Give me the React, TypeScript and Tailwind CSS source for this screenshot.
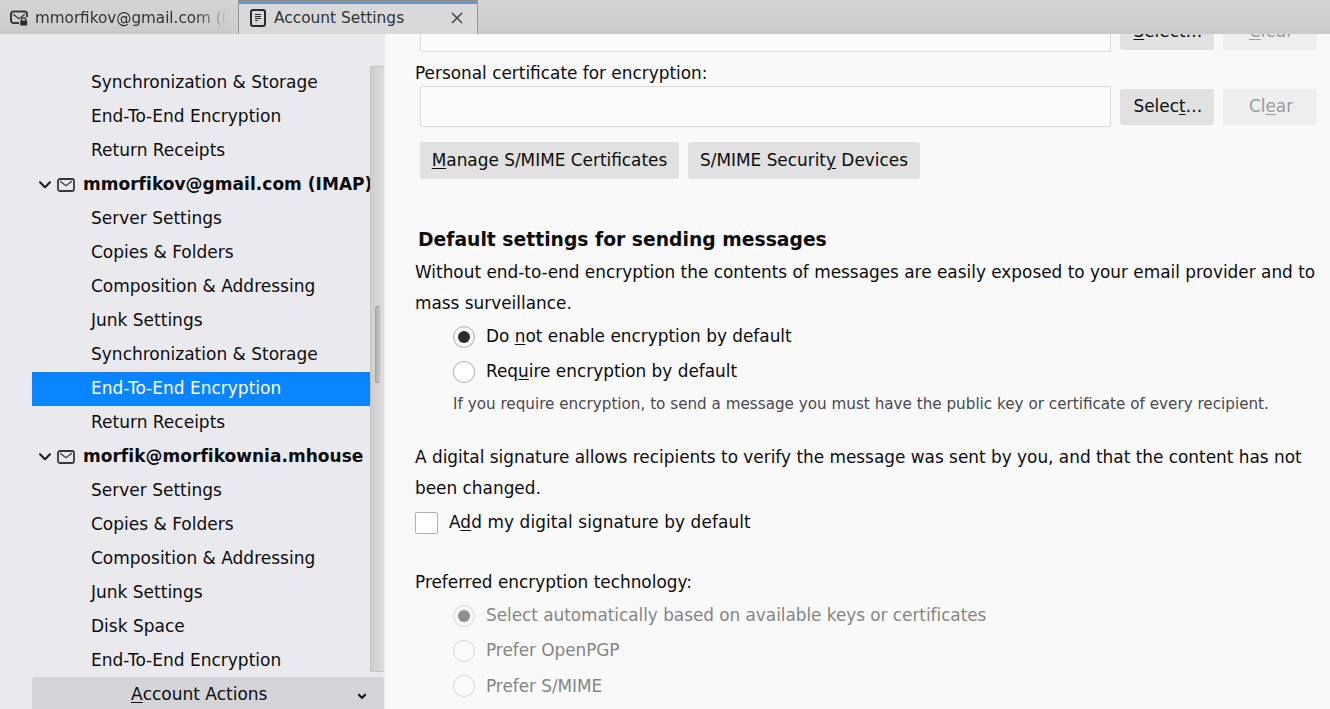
import type { ReactNode } from 'react';

const U = ({ children }: { children: ReactNode }) => (
  <span className="underline decoration-1 underline-offset-2">{children}</span>
);

const Envelope = ({ lock = false }: { lock?: boolean }) => (
  <svg width="18" height="16" viewBox="0 0 18 16" fill="none" className="shrink-0">
    <path d={lock ? 'M9 13H3.500a2.500 2.500 0 0 1-2.500-2.500V4A2.500 2.500 0 0 1 3.500 1.500h11A2.500 2.500 0 0 1 17 4V7' : 'M3 2h12a2 2 0 0 1 2 2v8a2 2 0 0 1-2 2H3a2 2 0 0 1-2-2V4a2 2 0 0 1 2-2z'} stroke="#38383b" strokeWidth={lock ? 2 : 1.8} />
    <path d="M3.500 4.500 9 8.800l5.500-4.300" stroke="#38383b" strokeWidth="1.200" strokeLinecap="round" />
    {lock && (
      <>
        <path d="M11.500 11V9.800a2.200 2.200 0 0 1 4.400 0V11" stroke="#2b2b2b" strokeWidth="1.200" />
        <rect x="10.200" y="10.500" width="7" height="5" rx="1" fill="#2b2b2b" />
      </>
    )}
  </svg>
);

const Twisty = () => (
  <svg width="12" height="8" viewBox="0 0 12 8" fill="none" className="shrink-0">
    <path d="M1 1.300 6 6.300l5-5" stroke="#18181b" strokeWidth="2" strokeLinecap="round" strokeLinejoin="round" />
  </svg>
);

type Item = { label: string; account?: boolean; selected?: boolean };

const items: Item[] = [
  { label: 'Synchronization & Storage' },
  { label: 'End-To-End Encryption' },
  { label: 'Return Receipts' },
  { label: 'mmorfikov@gmail.com (IMAP)', account: true },
  { label: 'Server Settings' },
  { label: 'Copies & Folders' },
  { label: 'Composition & Addressing' },
  { label: 'Junk Settings' },
  { label: 'Synchronization & Storage' },
  { label: 'End-To-End Encryption', selected: true },
  { label: 'Return Receipts' },
  { label: 'morfik@morfikownia.mhouse', account: true },
  { label: 'Server Settings' },
  { label: 'Copies & Folders' },
  { label: 'Composition & Addressing' },
  { label: 'Junk Settings' },
  { label: 'Disk Space' },
  { label: 'End-To-End Encryption' },
];

function TreeRow({ label, account, selected }: Item) {
  if (account) {
    return (
      <li className="flex h-[34px] items-center pl-[7px] font-bold tracking-[0.03px]">
        <Twisty />
        <span className="ml-[6px] flex"><Envelope /></span>
        <span className="ml-2 pb-[2px] leading-[32px]">{label}</span>
      </li>
    );
  }
  return (
    <li className={selected ? 'h-[34px] bg-[#0a84ff] pl-[59px] leading-[32px] text-white' : 'h-[34px] pl-[59px] leading-[32px]'}>
      {label}
    </li>
  );
}

function CertificateRow({ select, clear }: { select: ReactNode; clear: ReactNode }) {
  return (
    <div className="flex h-[41px] items-center pl-[5px]">
      <div className="h-[41px] w-[691px] rounded-[2px] border border-[#d9d9d9] bg-[#fbfbfb]" />
      <button className="ml-[9px] h-9 w-[94px] rounded-[2px] bg-[#e1e1e1] pl-[2px]">{select}</button>
      <button disabled className="ml-[9px] h-9 w-[94px] rounded-[2px] bg-[#eeeeee] pl-[2px] text-[#9b9b9b]">{clear}</button>
    </div>
  );
}

function Radio({ checked, disabled, children }: { checked?: boolean; disabled?: boolean; children: ReactNode }) {
  return (
    <label className={disabled ? 'flex h-[35.300px] items-center pl-[38px] tracking-[-0.04px] text-[#858585]' : 'flex h-[35px] items-center pl-[38px]'}>
      <span className={`flex size-[22px] items-center justify-center rounded-full border ${disabled ? 'border-[#d6d6d6]' : 'border-[#afafaf]'} ${checked ? 'bg-[#f6f6f6]' : disabled ? 'bg-[#fcfcfc]' : 'bg-white'}`}>
        {checked && <span className={disabled ? 'size-3 rounded-full bg-[#8e8e8e]' : 'size-3 rounded-full bg-[#2b2b2b]'} />}
      </span>
      <span className="ml-[11px]">{children}</span>
    </label>
  );
}

export default function App() {
  return (
    <div className="flex h-[709px] w-[1330px] flex-col overflow-hidden bg-[#f9f9fa] font-['DejaVu_Sans',sans-serif] text-[16.900px] whitespace-nowrap text-[#0c0c0d]">
      <header className="flex h-[34px] shrink-0 bg-linear-to-b from-[#d5d5d5] to-[#cacaca] text-[15.400px] text-[#2e3436]">
        <div className="flex h-[34px] w-[238px] items-center overflow-hidden pl-[10px]">
          <span className="pt-[2px]"><Envelope lock /></span>
          <span className="ml-[7px] w-[193px] overflow-hidden pt-[2px] text-[15.200px] leading-[34px] [mask-image:linear-gradient(to_right,black_160px,transparent_193px)]">mmorfikov@gmail.com (IMAP)</span>
        </div>
        <div className="flex h-[34px] w-[240px] items-center border-x border-[#969696] bg-[#d9d9d9] shadow-[inset_0_1px_0_#8b8b8b,inset_0_4px_0_#6699cd]">
          <svg width="16" height="18" viewBox="0 0 16 18" fill="none" className="mt-px ml-[11px]">
            <rect x="1" y="1" width="14" height="16" rx="2" stroke="#2b2b2b" strokeWidth="2" />
            <path d="M5 5.500h6M5 7.500h6M5 9.500h6M5 11.500h3" stroke="#2b2b2b" />
          </svg>
          <span className="ml-2 pt-[2px] leading-[34px]">Account Settings</span>
          <svg width="12" height="12" viewBox="0 0 12 12" className="mt-px mr-[14px] ml-auto">
            <path d="M1 1l10 10M11 1 1 11" stroke="#3f4446" strokeWidth="1.500" />
          </svg>
        </div>
      </header>

      <div className="flex min-h-0 flex-1">
        <aside className="flex w-[385px] shrink-0 flex-col bg-[#eaeaee] pt-8 pl-8 text-[17px]">
          <div className="flex h-[606px] shrink-0">
            <ul className="w-[338px] overflow-hidden">
              {items.map((item, i) => <TreeRow key={i} {...item} />)}
            </ul>
            <div className="flex w-[14px] justify-center border-y border-l border-[#c3c3c3] bg-linear-to-r from-[#cecece] to-[#dddddd] pt-[239px]">
              <div className="h-[77px] w-[5px] rounded-[2px] border border-y-[#989898] border-r-[#bebebe] border-l-[#a4a4a4] bg-linear-to-r from-[#b0b0b0] to-[#c4c4c4]" />
            </div>
          </div>
          <button className="mt-[5px] flex h-9 w-[352px] shrink-0 items-center rounded-t-[2px] bg-[#d4d4d8] pl-[99px]">
            <U>A</U>ccount Actions
            <svg width="10" height="7" viewBox="0 0 10 7" fill="none" className="mt-[2px] mr-[17px] ml-auto">
              <path d="M1.300 1.300 5 4.800l3.700-3.500" stroke="#0c0c0d" strokeWidth="2" />
            </svg>
          </button>
        </aside>

        <main className="flex-1 overflow-hidden pl-[30px]">
          <div className="-mt-[23px]">
            <CertificateRow select={<><U>S</U>elect…</>} clear={<><U>C</U>lear</>} />
          </div>
          <p className="h-[34px] pt-[5px] leading-8">Personal certificate for encryption:</p>
          <CertificateRow select={<>Selec<U>t</U>…</>} clear={<>Cl<U>e</U>ar</>} />
          <div className="mt-[15px] flex gap-[9px] pl-[5px]">
            <button className="h-[37px] w-[259px] rounded-[2px] bg-[#e1e1e1]"><U>M</U>anage S/MIME Certificates</button>
            <button className="h-[37px] w-[232px] rounded-[2px] bg-[#e1e1e1]">S/MIME Securit<U>y</U> Devices</button>
          </div>

          <h2 className="mt-[45px] h-[33px] pl-[3px] text-[18.750px] leading-[32px] font-bold">Default settings for sending messages</h2>
          <p className="leading-[31px]">
            Without end-to-end encryption the contents of messages are easily exposed to your email provider and to<br />
            mass surveillance.
          </p>
          <div>
            <Radio checked>Do <U>n</U>ot enable encryption by default</Radio>
            <Radio>Req<U>u</U>ire encryption by default</Radio>
          </div>
          <p className="pl-[38px] text-[15.200px] leading-[30px] text-[#4a4a4f]">If you require encryption, to send a message you must have the public key or certificate of every recipient.</p>

          <p className="mt-[23px] leading-[31px]">
            A digital signature allows recipients to verify the message was sent by you, and that the content has not<br />
            been changed.
          </p>
          <label className="mt-[2px] flex h-[34px] items-center tracking-[0.1px]">
            <span className="h-[22px] w-[23px] rounded-[2px] border border-[#b1b1b1] bg-white" />
            <span className="ml-[11px] pb-px">A<U>d</U>d my digital signature by default</span>
          </label>
          <p className="mt-[26px] leading-[32px]">Preferred encryption technology:</p>
          <div>
            <Radio checked disabled>Select automatically based on available keys or certificates</Radio>
            <Radio disabled>Prefer OpenPGP</Radio>
            <Radio disabled>Prefer S/MIME</Radio>
          </div>
        </main>
      </div>
    </div>
  );
}
